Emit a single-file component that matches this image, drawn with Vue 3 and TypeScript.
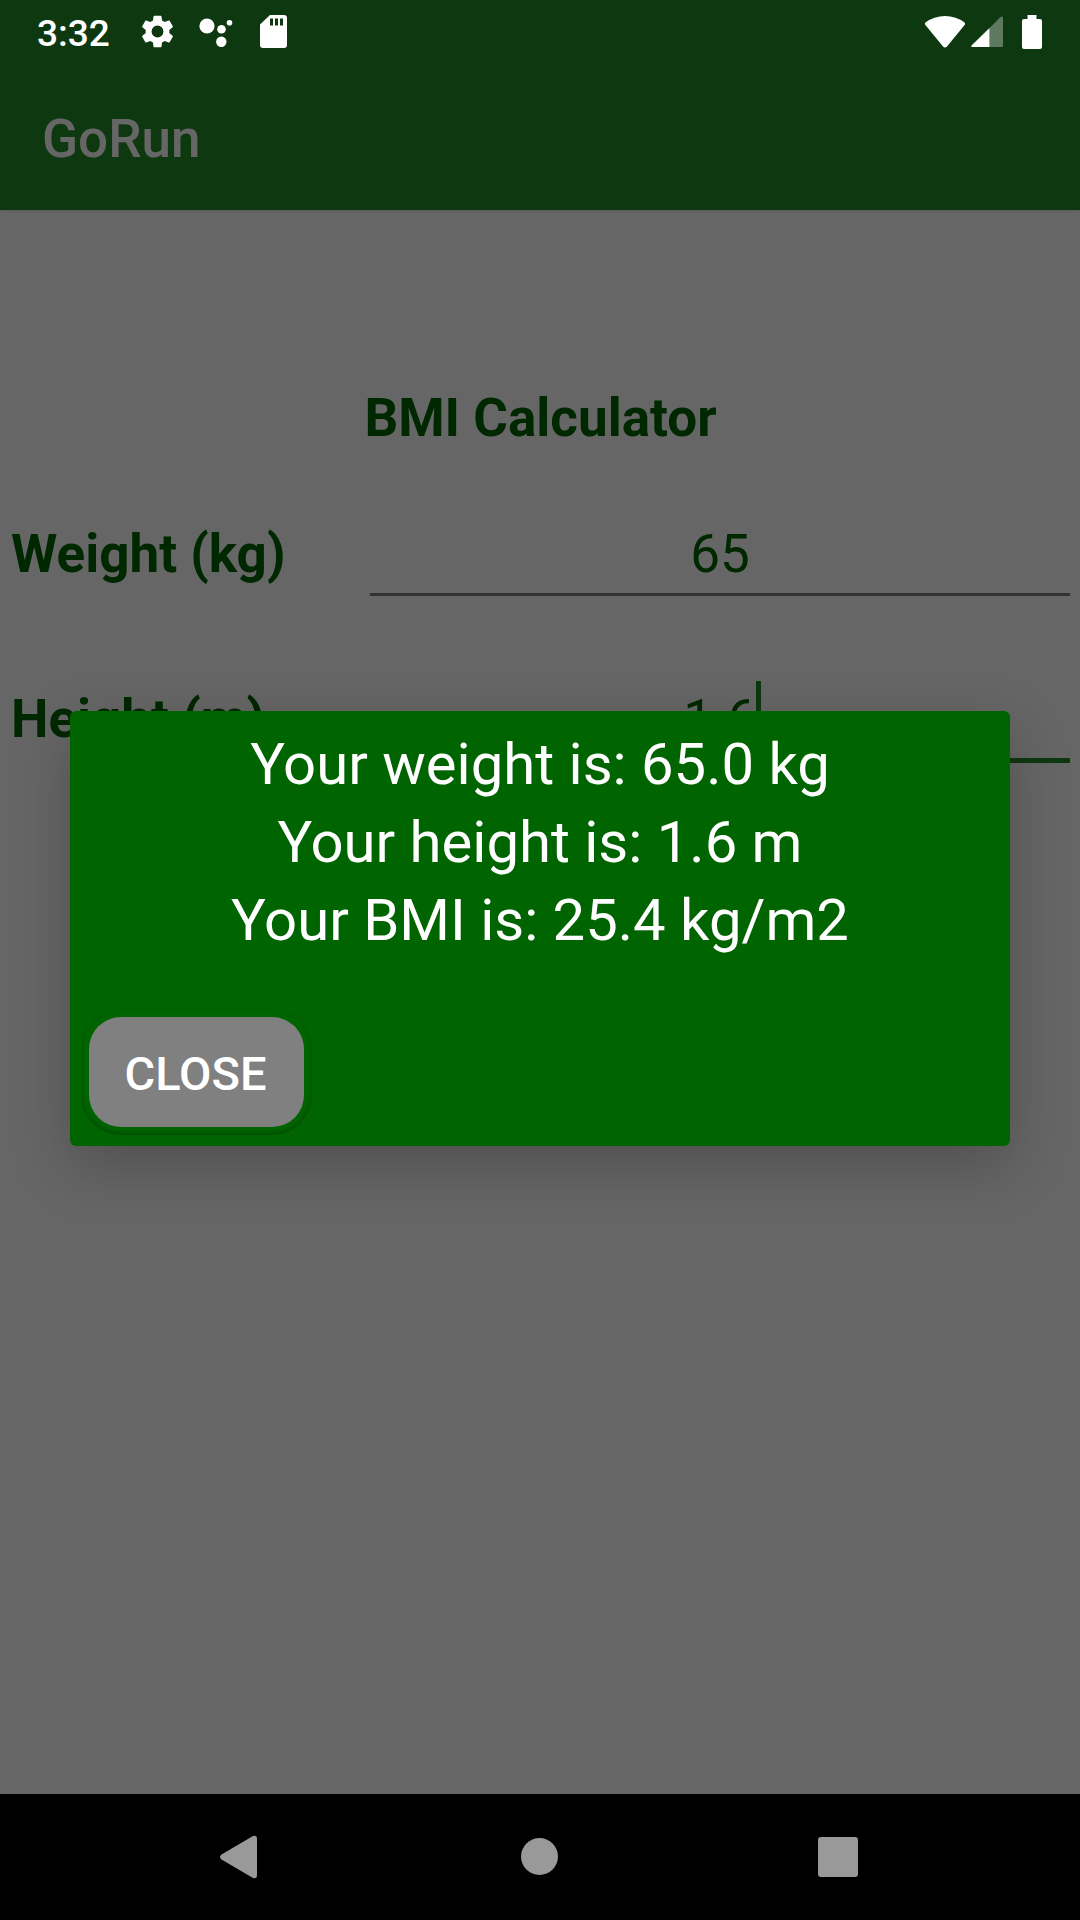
<script setup lang="ts">
import { computed, ref } from 'vue'

const weight = ref('65')
const height = ref('1.6')
const open = ref(true)

const lines = computed<string[]>(() => {
  const w = Number(weight.value)
  const h = Number(height.value)
  return [
    `Your weight is: ${w.toFixed(1)} kg`,
    `Your height is: ${h.toFixed(1)} m`,
    `Your BMI is: ${(w / (h * h)).toFixed(1)} kg/m2`,
  ]
})
</script>

<template>
  <div class="screen">
    <div class="status">
      <time class="clock">3:32</time>
      <svg class="gear" viewBox="2 2 20 20" aria-hidden="true">
        <path d="M19.14 12.94c.04-.3.06-.61.06-.94 0-.32-.02-.64-.07-.94l2.03-1.58a.49.49 0 0 0 .12-.61l-1.92-3.32a.488.488 0 0 0-.59-.22l-2.39.96c-.5-.38-1.03-.7-1.62-.94l-.36-2.54a.484.484 0 0 0-.48-.41h-3.84c-.24 0-.43.17-.47.41l-.36 2.54c-.59.24-1.13.57-1.62.94l-2.39-.96c-.22-.08-.47 0-.59.22L2.74 8.87c-.12.21-.08.47.12.61l2.03 1.58c-.05.3-.09.63-.09.94s.02.64.07.94l-2.03 1.58a.49.49 0 0 0-.12.61l1.92 3.32c.12.22.37.29.59.22l2.39-.96c.5.38 1.03.7 1.62.94l.36 2.54c.05.24.24.41.48.41h3.84c.24 0 .44-.17.47-.41l.36-2.54c.59-.24 1.13-.56 1.62-.94l2.39.96c.22.08.47 0 .59-.22l1.92-3.32c.12-.22.07-.47-.12-.61l-2.01-1.58zM12 15.6A3.6 3.6 0 1 1 12 8.4a3.6 3.6 0 0 1 0 7.2z" />
      </svg>
      <svg class="dots" viewBox="0 0 34 30" aria-hidden="true">
        <circle cx="8" cy="9" r="7.6" />
        <circle cx="22.5" cy="12.3" r="4.3" />
        <circle cx="30.5" cy="5.8" r="2.8" />
        <circle cx="22.3" cy="24.7" r="5.2" />
      </svg>
      <svg class="card" viewBox="0 0 27 33" aria-hidden="true">
        <path fill-rule="evenodd" d="M10 0h14a3 3 0 0 1 3 3v27a3 3 0 0 1-3 3H3a3 3 0 0 1-3-3V9.500zM10 3.500v7h3v-7zM15 3.500v7h3v-7zM20 3.500v7h3v-7z" />
      </svg>
      <span class="spacer"></span>
      <svg class="wifi" viewBox="0 0 42 32" aria-hidden="true">
        <path d="M1.500 6.500Q10 0 21 0T40.500 6.500Q41.500 7.500 40.800 8.700L23 30.500Q21 32.500 19 30.500L1.200 8.700Q.5 7.500 1.500 6.500z" />
      </svg>
      <svg class="signal" viewBox="0 0 32 32" aria-hidden="true">
        <path opacity=".33" d="M18.500 12 29.500 1Q32-.5 32 2v27.500Q32 31 30.500 31h-12z" />
        <path d="M18.500 12v19H1.500Q-.5 31 .5 29.500z" />
      </svg>
      <svg class="battery" viewBox="0 0 20 34" aria-hidden="true">
        <path d="M5.500 0h9v4H18q2 0 2 2v26q0 2-2 2H2q-2 0-2-2V6q0-2 2-2h3.500z" />
      </svg>
    </div>

    <header class="bar"><h1>GoRun</h1></header>

    <main class="content">
      <h2>BMI Calculator</h2>
      <form class="form" @submit.prevent="open = true">
        <div class="row">
          <label for="weight">Weight (kg)</label>
          <div class="field"><input id="weight" v-model="weight" type="text" inputmode="decimal" /></div>
        </div>
        <div class="row">
          <label for="height">Height (m)</label>
          <div class="field active">
            <input id="height" v-model="height" type="text" inputmode="decimal" />
            <span class="caret"></span>
          </div>
        </div>
      </form>
    </main>

    <nav class="nav">
      <button type="button" aria-label="Back">
        <svg viewBox="0 0 42 42"><path d="M33 0Q37 -1 37 3v36q0 4-4 3L1.500 23.500Q-1.500 21 1.500 18.500z" /></svg>
      </button>
      <button type="button" aria-label="Home">
        <svg viewBox="0 0 42 42"><circle cx="20.500" cy="20.500" r="18.500" /></svg>
      </button>
      <button type="button" aria-label="Recent apps">
        <svg viewBox="0 0 42 42"><rect x="0" y="1" width="40" height="40" rx="3" /></svg>
      </button>
    </nav>

    <div v-if="open" class="scrim">
      <section class="dialog" role="dialog" aria-modal="true" aria-label="BMI result">
        <p v-for="line in lines" :key="line">{{ line }}</p>
        <button class="close" type="button" @click="open = false">CLOSE</button>
      </section>
    </div>
  </div>
</template>

<style>
body {
  margin: 0;
}
</style>

<style scoped>
.screen {
  position: relative;
  display: flex;
  flex-direction: column;
  min-height: 100vh;
  background: #fff;
  font-family: Roboto, "Noto Sans", sans-serif;
}

.status {
  position: relative;
  z-index: 2;
  display: flex;
  align-items: center;
  height: 63px;
  padding: 0 38px 0 37px;
  color: #fff;
}

.status svg {
  flex: none;
  fill: currentColor;
}

.clock {
  font-size: 37px;
  font-weight: 500;
  line-height: 44px;
  margin-top: 4px;
}

.gear {
  width: 33px;
  height: 33px;
  margin-left: 31px;
}

.dots {
  width: 34px;
  height: 30px;
  margin-left: 25px;
}

.card {
  width: 27px;
  height: 33px;
  margin-left: 27px;
}

.spacer {
  flex: 1;
}

.wifi {
  width: 42px;
  height: 32px;
  margin-right: 5px;
}

.signal {
  width: 32px;
  height: 32px;
  margin-right: 19px;
}

.battery {
  width: 20px;
  height: 34px;
}

.bar {
  display: flex;
  align-items: center;
  height: 210px;
  margin-top: -63px;
  padding: 68px 42px 0;
  box-sizing: border-box;
  background: #248c26;
  box-shadow: 0 1px 3px rgba(0, 0, 0, 0.12);
}

h1,
h2,
p {
  margin: 0;
}

h1 {
  color: #fff;
  font-size: 53px;
  font-weight: 500;
  line-height: 62px;
}

.content {
  flex: 1;
  padding: 177px 10px 0 11px;
  color: #006400;
  font-size: 53px;
  line-height: 62px;
}

h2 {
  font-size: 53px;
  font-weight: 700;
  text-align: center;
}

.form {
  display: flex;
  flex-direction: column;
  gap: 92px;
  margin-top: 74px;
}

.row {
  display: grid;
  grid-template-columns: 359px 1fr;
  align-items: start;
}

label {
  font-weight: 700;
}

.field {
  position: relative;
  display: flex;
  padding-bottom: 8px;
  border-bottom: 3px solid #808080;
}

.field.active {
  border-bottom: 5px solid #248c26;
}

input {
  width: 100%;
  height: 62px;
  padding: 0;
  border: 0;
  outline: 0;
  background: transparent;
  color: inherit;
  font: inherit;
  text-align: center;
}

.caret {
  position: absolute;
  top: -7px;
  left: calc(50% + 36px);
  width: 5px;
  height: 68px;
  background: #248c26;
}

.nav {
  position: relative;
  z-index: 2;
  display: flex;
  align-items: center;
  justify-content: center;
  gap: 257px;
  height: 126px;
  background: #000;
}

.nav button {
  display: flex;
  padding: 0;
  border: 0;
  background: none;
}

.nav svg {
  width: 42px;
  height: 42px;
  fill: #999;
  overflow: visible;
}

.scrim {
  position: absolute;
  inset: 0;
  z-index: 1;
  display: flex;
  align-items: center;
  padding: 63px 70px 126px;
  background: rgba(0, 0, 0, 0.6);
}

.dialog {
  flex: 1;
  padding: 14px 19px 19px;
  border-radius: 6px;
  background: #006400;
  box-shadow: 0 20px 60px rgba(0, 0, 0, 0.22);
  color: #fff;
  font-size: 58px;
  line-height: 78px;
  text-align: center;
}

.close {
  position: relative;
  display: block;
  width: 215px;
  height: 110px;
  margin-top: 58px;
  padding: 3px 2px 0 0;
  border: 0;
  border-radius: 32px;
  background: #808080;
  color: #fff;
  font: 500 47px/56px Roboto, "Noto Sans", sans-serif;
}

/* Faint elevation edge around the button */
.close::after {
  content: "";
  position: absolute;
  inset: -8px;
  border-radius: 40px;
  box-shadow: inset 0 -2px 4px rgba(0, 0, 0, 0.25);
  pointer-events: none;
}
</style>
